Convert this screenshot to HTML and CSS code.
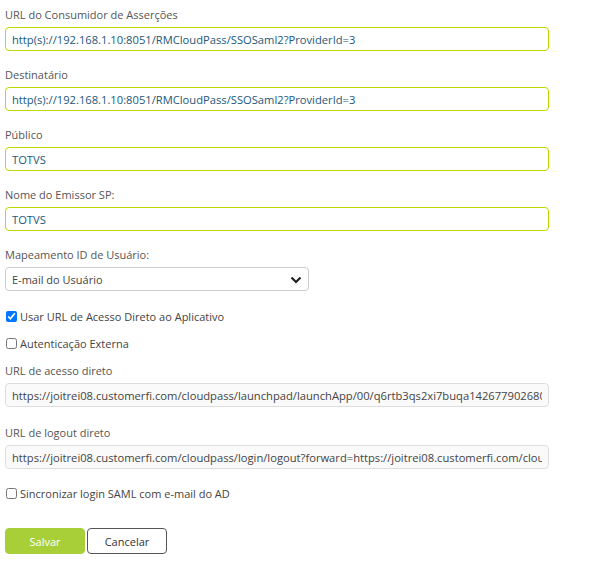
FILE: index.html
```html
<!DOCTYPE html>
<html lang="pt-BR">
<head>
  <meta charset="UTF-8">
  <title>Configuração SAML</title>
  <link rel="stylesheet" href="styles.css">
</head>
<body>
  <form class="saml-form">

    <!-- Campos do provedor -->
    <div class="field">
      <label>URL do Consumidor de Asserções</label>
      <input class="text-input required" value="http(s)://192.168.1.10:8051/RMCloudPass/SSOSaml2?ProviderId=3">
    </div>
    <div class="field">
      <label>Destinatário</label>
      <input class="text-input required" value="http(s)://192.168.1.10:8051/RMCloudPass/SSOSaml2?ProviderId=3">
    </div>
    <div class="field">
      <label>Público</label>
      <input class="text-input required" value="TOTVS">
    </div>
    <div class="field">
      <label>Nome do Emissor SP:</label>
      <input class="text-input required" value="TOTVS">
    </div>
    <div class="field">
      <label>Mapeamento ID de Usuário:</label>
      <div class="select-wrap">
        <select class="select-input">
          <option>E-mail do Usuário</option>
        </select>
        <svg class="chevron" width="12" height="8" viewBox="0 0 12 8">
          <path d="M1.5 1.5 L6 6 L10.5 1.5" fill="none" stroke="#222" stroke-width="2.2"/>
        </svg>
      </div>
    </div>

    <!-- Opções -->
    <label class="check first"><input type="checkbox" checked> Usar URL de Acesso Direto ao Aplicativo</label>
    <label class="check"><input type="checkbox"> Autenticação Externa</label>

    <div class="field direct">
      <label>URL de acesso direto</label>
      <input class="text-input readonly" value="https://joitrei08.customerfi.com/cloudpass/launchpad/launchApp/00/q6rtb3qs2xi7buqa1426779026800">
    </div>
    <div class="field">
      <label>URL de logout direto</label>
      <input class="text-input readonly" value="https://joitrei08.customerfi.com/cloudpass/login/logout?forward=https://joitrei08.customerfi.com/cloudpass">
    </div>

    <label class="check sync"><input type="checkbox"> Sincronizar login SAML com e-mail do AD</label>

    <div class="actions">
      <button type="button" class="btn btn-save">Salvar</button>
      <button type="button" class="btn btn-cancel">Cancelar</button>
    </div>
  </form>
</body>
</html>
```

FILE: styles.css
```css
body {
  margin: 0;
  padding: 6px 5px;
  font-family: "Open Sans", "Noto Sans", sans-serif;
  font-size: 11px;
  color: #555;
  background: #fff;
}

.saml-form {
  width: 544px;
}

/* Campos */
.field {
  display: flex;
  flex-direction: column;
  margin-bottom: 15px;
}
.field > label {
  line-height: 17px;
  margin-bottom: 4px;
  color: #555;
}

.text-input {
  box-sizing: border-box;
  height: 24px;
  width: 100%;
  padding: 0 6px;
  font-family: inherit;
  font-size: 11.2px;
  color: #22587a;
  border-radius: 4px;
  outline: none;
}
.text-input.required {
  border: 1px solid #bdd900;
  background: #fff;
}
.text-input.readonly {
  border: 1px solid #ddd;
  background: #fafafa;
  color: #444;
}

.select-wrap {
  position: relative;
  width: 304px;
}
.select-input {
  appearance: none;
  box-sizing: border-box;
  width: 100%;
  height: 24px;
  padding: 0 6px;
  font-family: inherit;
  font-size: 11px;
  color: #444;
  background: #fff;
  border: 1px solid #ccc;
  border-radius: 4px;
}
.chevron {
  position: absolute;
  right: 7px;
  top: 9px;
}

/* Checkboxes */
.check {
  display: flex;
  align-items: center;
  line-height: 17px;
  color: #444;
  margin-bottom: 10px;
}
.check input {
  width: 11px;
  height: 11px;
  margin: 0 3px 0 1px;
}
.check.first {
  margin-top: 17px;
}
.field.direct {
  margin-top: 10px;
  margin-bottom: 17px;
}
.check.sync {
  margin-top: 16px;
}

/* Botões */
.actions {
  display: flex;
  gap: 2px;
  margin-top: 26px;
}
.btn {
  box-sizing: border-box;
  width: 80px;
  height: 26px;
  font-family: inherit;
  font-size: 11px;
  border-radius: 4px;
  cursor: pointer;
}
.btn-save {
  background: #a9cf38;
  border: 1px solid #a9cf38;
  color: #fff;
}
.btn-cancel {
  background: #fff;
  border: 1px solid #555;
  color: #333;
}
```
